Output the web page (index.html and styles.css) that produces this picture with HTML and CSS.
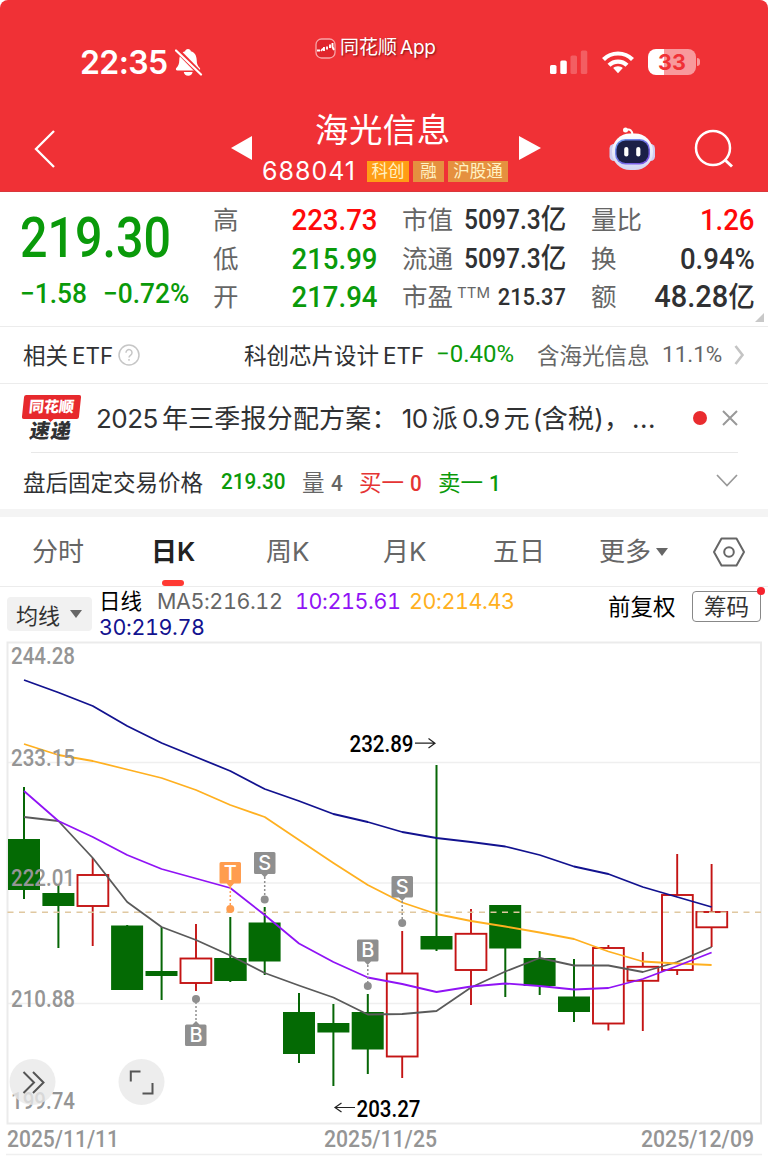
FILE: index.html
```html
<!DOCTYPE html>
<html lang="zh-CN">
<head>
    <meta charset="UTF-8">
    <meta name="viewport" content="width=device-width, initial-scale=1.0">
    <title>海光信息 688041</title>
    <link rel="stylesheet" href="styles.css">
</head>
<body>
    <header class="header">
        <div class="status-bar">
            <div class="clock">
                <span class="time">22:35</span>
                <svg class="bell" width="28" height="29" viewBox="0 0 28 29">
                    <path d="M13 1c-1.700 0-2.600 1-2.800 2.200C6 4.400 4.400 8 4.300 12c-.1 4-1 6-3 8-.8 1-.3 2.500 1 2.500h21.500c1.200 0 1.800-1.500 1-2.500-2.100-2-3-4-3.100-8-.1-4-1.700-7.600-5.900-8.800C15.600 2 14.700 1 13 1z" fill="#fff"/>
                    <path d="M8.800 24h8.800c-.3 2.200-2 3.800-4.400 3.800S9 26.200 8.800 24z" fill="#fff"/>
                    <path d="M0 0L27 27.500" stroke="#f03136" stroke-width="5"/>
                    <path d="M1 2.500L26 26.500" stroke="#fff" stroke-width="2.200" stroke-linecap="round"/>
                </svg>
            </div>
            <div class="brand">
                <svg width="21" height="21" viewBox="0 0 21 21">
                    <rect x="1" y="1" width="19" height="19" rx="5.500" fill="#e0252c" stroke="#f7a5a7" stroke-width="1.300"/>
                    <path d="M2 12.500h3M6 13l2-2.500M9 9v4M12 8.500v3M15 6.500v3.500M17.500 5v4l1.500 3" stroke="#fff" stroke-width="1.900" fill="none"/>
                </svg>
                <span class="brand-cn">同花顺</span><span class="brand-en">App</span>
            </div>
            <div class="signals">
                <svg width="38" height="24" viewBox="0 0 38 24" fill="#fff">
                    <rect x="0" y="15" width="6.500" height="9" rx="1.600"/>
                    <rect x="10.300" y="10.500" width="6.500" height="13.500" rx="1.600"/>
                    <rect x="20.500" y="5.500" width="6.500" height="18.500" rx="1.600" opacity=".22"/>
                    <rect x="30.800" y="0.500" width="6.500" height="23.500" rx="1.600" opacity=".22"/>
                </svg>
                <svg width="32" height="24" viewBox="0 0 32 24" fill="none" stroke="#fff" stroke-width="4.200">
                    <path d="M1.500 9.500A20.500 20.500 0 0 1 30.500 9.500"/>
                    <path d="M7 15.300A12.700 12.700 0 0 1 25 15.300"/>
                    <path d="M16 16.300c-2.100 0-3.700.7-4.800 1.800L16 23.200l4.800-5.100c-1.100-1.100-2.700-1.800-4.800-1.800z" fill="#fff" stroke="none"/>
                </svg>
                <div class="battery"><span>33</span></div>
            </div>
        </div>
        <div class="title-bar">
            <svg class="back" width="22" height="40" viewBox="0 0 22 40">
                <path d="M20 2L2 20L20 38" fill="none" stroke="#fff" stroke-width="2.300"/>
            </svg>
            <svg class="prev" width="22" height="24" viewBox="0 0 22 24"><path d="M0 12L21 0V24z" fill="#fff"/></svg>
            <div class="stock">
                <h1>海光信息</h1>
                <div class="stock-sub">
                    <span class="code">688041</span>
                    <span class="tag tag-kc">科创</span>
                    <span class="tag">融</span>
                    <span class="tag tag-hgt">沪股通</span>
                </div>
            </div>
            <svg class="next" width="22" height="24" viewBox="0 0 22 24"><path d="M22 12L0 0V24z" fill="#fff"/></svg>
            <svg class="robot" width="48" height="46" viewBox="0 0 48 46">
                <defs>
                    <linearGradient id="shell" x1="0" y1="0" x2="0" y2="1">
                        <stop offset="0" stop-color="#fff"/>
                        <stop offset="1" stop-color="#d3d6f2"/>
                    </linearGradient>
                    <linearGradient id="face" x1="0" y1="0" x2="1" y2="1">
                        <stop offset="0" stop-color="#6a9df0"/>
                        <stop offset="1" stop-color="#7d4be0"/>
                    </linearGradient>
                </defs>
                <path d="M18 4q6-2 6.500 5" fill="none" stroke="#fff" stroke-width="2"/>
                <circle cx="17.500" cy="4" r="2.500" fill="#fff"/>
                <rect x="1.500" y="18" width="9" height="17" rx="4.500" fill="#cfcdf0"/>
                <rect x="38" y="18" width="9" height="17" rx="4.500" fill="#cfcdf0"/>
                <rect x="4" y="7.500" width="41" height="36.500" rx="18" fill="url(#shell)"/>
                <rect x="7" y="13" width="35" height="25.500" rx="10.500" fill="url(#face)"/>
                <rect x="8.500" y="14.500" width="32" height="22.500" rx="9" fill="#1b1f47"/>
                <rect x="16.200" y="21" width="4.200" height="9.500" rx="2.100" fill="#fff"/>
                <rect x="28.200" y="21" width="4.200" height="9.500" rx="2.100" fill="#fff"/>
            </svg>
            <svg class="search" width="40" height="40" viewBox="0 0 40 40" fill="none" stroke="#fff" stroke-width="2.500">
                <circle cx="19" cy="19" r="17"/>
                <path d="M30.500 30.500L38 37.500" stroke-width="3"/>
            </svg>
        </div>
    </header>

    <section class="quote">
        <div class="price">
            <div class="last"><span class="num">219.30</span></div>
            <div class="change"><span class="num">−1.58</span><span class="num">−0.72%</span></div>
        </div>
        <dl class="stats">
            <div><dt>高</dt><dd class="num red">223.73</dd></div>
            <div><dt>低</dt><dd class="num green">215.99</dd></div>
            <div><dt>开</dt><dd class="num green">217.94</dd></div>
        </dl>
        <dl class="stats stats-mid">
            <div><dt>市值</dt><dd class="num">5097.3<b>亿</b></dd></div>
            <div><dt>流通</dt><dd class="num">5097.3<b>亿</b></dd></div>
            <div><dt>市盈<sup>TTM</sup></dt><dd class="num small">215.37</dd></div>
        </dl>
        <dl class="stats">
            <div><dt>量比</dt><dd class="num red">1.26</dd></div>
            <div><dt>换</dt><dd class="num">0.94%</dd></div>
            <div><dt>额</dt><dd class="num big">48.28<b>亿</b></dd></div>
        </dl>
        <i class="corner"></i>
    </section>

    <section class="etf">
        <span class="etf-label">相关<em>ETF</em></span>
        <svg width="22" height="22" viewBox="0 0 22 22" fill="none" stroke="#c6c6c6" stroke-width="1.500">
            <circle cx="11" cy="11" r="10"/>
            <path d="M8 8.800a3 3 0 1 1 4.700 2.300c-1.200.8-1.700 1.300-1.700 2.500M11 15v1.800"/>
        </svg>
        <span class="etf-name">科创芯片设计<em>ETF</em></span>
        <span class="etf-change">−0.40%</span>
        <span class="etf-hold">含海光信息</span>
        <span class="etf-pct">11.1%</span>
        <svg class="arrow" width="11" height="20" viewBox="0 0 11 20"><path d="M1.500 1L8.500 10L1.500 19" fill="none" stroke="#c4c4c4" stroke-width="2.600"/></svg>
    </section>

    <section class="news">
        <div class="news-logo">
            <div class="logo-top">同花顺</div>
            <div class="logo-bottom">速递</div>
        </div>
        <p><em>2025</em>年三季报分配方案：<em>10</em>派<em>0.9</em>元<em class="paren">(</em>含税)，<em class="more-dots">...</em></p>
        <i class="dot"></i>
        <svg width="16" height="16" viewBox="0 0 16 16"><path d="M1 1L15 15M15 1L1 15" stroke="#999" stroke-width="2"/></svg>
    </section>

    <section class="after-hours">
        <span class="ah-label">盘后固定交易价格</span>
        <span class="ah-price num">219.30</span>
        <span class="ah-vol">量 <i class="num">4</i></span>
        <span class="ah-buy">买一 <i class="num">0</i></span>
        <span class="ah-sell">卖一 <i class="num">1</i></span>
        <svg width="22" height="13" viewBox="0 0 22 13"><path d="M1 1L11 11.500L21 1" fill="none" stroke="#999" stroke-width="1.700"/></svg>
    </section>

    <nav class="tabs">
        <a>分时</a>
        <a class="active">日K</a>
        <a>周K</a>
        <a>月K</a>
        <a>五日</a>
        <a class="more">更多<i></i></a>
        <svg width="34" height="30" viewBox="0 0 34 30" fill="none" stroke="#666" stroke-width="2">
            <path d="M9.500 1.500H24.500L32 15L24.500 28.500H9.500L2 15z" stroke-linejoin="round"/>
            <circle cx="17" cy="15" r="4.800"/>
        </svg>
    </nav>

    <section class="ma-bar">
        <button class="ma-select">均线<i></i></button>
        <div class="ma-values">
            <span class="ma-title">日线</span>
            <span class="ma5">MA5:216.12</span>
            <span class="ma10">10:215.61</span>
            <span class="ma20">20:214.43</span>
            <span class="ma30">30:219.78</span>
        </div>
        <span class="adjust">前复权</span>
        <button class="chips">筹码<i class="badge"></i></button>
    </section>

    <svg class="chart" width="768" height="515" viewBox="0 641 768 515">
        <!-- grid -->
        <g class="grid">
            <path d="M7.500 762.500H761M7.500 883H761M7.500 1003.500H761"/>
            <path d="M6 1154.500H762"/>
            <rect class="frame" x="7.500" y="642.500" width="753.500" height="481"/>
        </g>

        <!-- falling candles -->
        <g class="down">
            <path d="M24 787V899M58.400 885V948M127.200 925V990M161.600 927V1000M230.300 917V982M264.700 907V975M299 993V1063M333.400 1004V1086M367.800 994V1074M436.500 765V951M505.300 905V997M539.700 951V995M574 959V1022"/>
            <rect x="8" y="839" width="32" height="51"/>
            <rect x="42.400" y="893" width="32" height="13"/>
            <rect x="111.100" y="925.500" width="32" height="64.500"/>
            <rect x="145.500" y="971" width="32" height="5"/>
            <rect x="214.200" y="958" width="32.500" height="23"/>
            <rect x="248.600" y="922.500" width="32" height="39"/>
            <rect x="283" y="1012" width="32" height="42"/>
            <rect x="317.400" y="1023" width="32" height="9.500"/>
            <rect x="351.700" y="1012" width="32" height="37.500"/>
            <rect x="420.500" y="936" width="32" height="13.500"/>
            <rect x="489.200" y="905" width="32" height="43.500"/>
            <rect x="523.600" y="958" width="32" height="28"/>
            <rect x="558" y="996.500" width="32" height="15.500"/>
        </g>

        <!-- rising candles -->
        <g class="up">
            <path d="M92.700 858V875M92.700 906V946M196 924V958M196 983V991M402.200 931V973M402.200 1057V1078M471 909V933M471 970V1005M608.400 945V948M608.400 1024V1030.500M642.800 952V966M642.800 981V1031M677.200 854V895M677.200 970V975M711.600 864V912M711.600 928V947"/>
            <rect x="77.500" y="875" width="30.800" height="31"/>
            <rect x="180.500" y="958.500" width="30.800" height="24.500"/>
            <rect x="386.800" y="973.500" width="30.800" height="83"/>
            <rect x="455.600" y="933.800" width="30.800" height="36.200"/>
            <rect x="593" y="948" width="30.800" height="75.500"/>
            <rect x="627.500" y="966.800" width="30.800" height="14"/>
            <rect x="662" y="895" width="30.800" height="75"/>
            <rect x="696.400" y="912" width="30.800" height="15.300"/>
        </g>

        <path class="last-line" d="M7.500 912.300H761"/>

        <!-- moving averages -->
        <g class="ma">
            <polyline stroke="#5a5a5a" points="24,817 58.400,821 92.800,858 127.200,902 161.600,927 196,940 230.300,955.500 264.700,973 299,985.500 333.400,997.500 367.800,1014.500 402.200,1014 436.500,1011 471,987.500 505.300,971.500 539.700,958 574,965.500 608.400,965.500 642.800,972 677.200,962 711.600,947"/>
            <polyline stroke="#ffb020" points="24,744 58.400,755 92.800,761 127.200,769.500 161.600,778 196,790 230.300,805 264.700,817 299,840 333.400,863 367.800,885 402.200,902.500 436.500,914 471,921 505.300,926.500 539.700,932.500 574,939 608.400,951.500 642.800,961.500 677.200,963.500 711.600,965"/>
            <polyline stroke="#9013f5" points="24,791 58.400,821 92.800,837 127.200,855 161.600,869 196,878.500 230.300,888 264.700,915 299,943.500 333.400,962 367.800,977.500 402.200,984 436.500,992 471,986.500 505.300,983.500 539.700,986 574,989.500 608.400,988 642.800,979 677.200,966 711.600,952.500"/>
            <polyline stroke="#12128f" points="24,680 58.400,692.500 92.800,706 127.200,726 161.600,743 196,757 230.300,771 264.700,789 299,801 333.400,814 367.800,822 402.200,832 436.500,838 471,842 505.300,846.500 539.700,855 574,866.500 608.400,874 642.800,887 677.200,897 711.600,907"/>
        </g>

        <!-- trade marks -->
        <g class="mark mark-t">
            <path class="stem" d="M230.300 887V906"/>
            <circle cx="230.300" cy="909" r="4"/>
            <path d="M221 862H239.500a1.500 1.500 0 0 1 1.500 1.500V882a1.500 1.500 0 0 1-1.500 1.500H234l-3.700 4l-3.700-4H221a1.500 1.500 0 0 1-1.500-1.500V863.500a1.500 1.500 0 0 1 1.500-1.500z"/>
            <text x="230.300" y="880">T</text>
        </g>
        <g class="mark">
            <path class="stem" d="M264.700 877V896"/>
            <circle cx="264.700" cy="899.500" r="4"/>
            <path d="M255.500 852H274a1.500 1.500 0 0 1 1.500 1.500V872.500a1.500 1.500 0 0 1-1.500 1.500H268l-3.300 3.500l-3.300-3.500H255.500a1.500 1.500 0 0 1-1.500-1.500V853.500a1.500 1.500 0 0 1 1.500-1.500z"/>
            <text x="264.700" y="870">S</text>
        </g>
        <g class="mark">
            <path class="stem" d="M402.200 901V919"/>
            <circle cx="402.200" cy="923" r="4"/>
            <path d="M393 876H411.500a1.500 1.500 0 0 1 1.500 1.500V896a1.500 1.500 0 0 1-1.500 1.500H405.500l-3.300 3.500l-3.300-3.500H393a1.500 1.500 0 0 1-1.500-1.500V877.500a1.500 1.500 0 0 1 1.500-1.500z"/>
            <text x="402.200" y="893.500">S</text>
        </g>
        <g class="mark">
            <path class="stem" d="M367.800 965V983"/>
            <circle cx="367.800" cy="986" r="4"/>
            <path d="M358.500 939.500H377a1.500 1.500 0 0 1 1.500 1.500V960a1.500 1.500 0 0 1-1.500 1.500H371l-3.300 3.500l-3.300-3.500H358.500a1.500 1.500 0 0 1-1.500-1.500V941a1.500 1.500 0 0 1 1.500-1.500z"/>
            <text x="367.800" y="957">B</text>
        </g>
        <g class="mark">
            <path class="stem" d="M196 1002V1021"/>
            <circle cx="196" cy="999" r="4"/>
            <path d="M186.500 1024.500H192.500l3.500-3.500l3.500 3.500H205a1.500 1.500 0 0 1 1.500 1.500V1044.500a1.500 1.500 0 0 1-1.500 1.500H186.500a1.500 1.500 0 0 1-1.500-1.500V1026a1.500 1.500 0 0 1 1.500-1.500z"/>
            <text x="196" y="1042">B</text>
        </g>

        <!-- high / low of the visible range -->
        <g class="extreme">
            <text x="349.500" y="752" textLength="64" lengthAdjust="spacingAndGlyphs">232.89</text>
            <path d="M415 743.200H435M428.500 738.500L435 743.200L428.500 748"/>
            <text x="356.500" y="1116.500" textLength="64" lengthAdjust="spacingAndGlyphs">203.27</text>
            <path d="M355 1107.500H335M341.500 1103L335 1107.500L341.500 1112"/>
        </g>

        <g class="axis">
            <text x="11" y="664" textLength="64" lengthAdjust="spacingAndGlyphs">244.28</text>
            <text x="11" y="765.500" textLength="64" lengthAdjust="spacingAndGlyphs">233.15</text>
            <text x="11" y="886" textLength="64" lengthAdjust="spacingAndGlyphs">222.01</text>
            <text x="11" y="1006.500" textLength="64" lengthAdjust="spacingAndGlyphs">210.88</text>
            <text x="11" y="1108.500" textLength="64" lengthAdjust="spacingAndGlyphs">199.74</text>
            <text x="7" y="1146.500" textLength="112" lengthAdjust="spacingAndGlyphs">2025/11/11</text>
            <text x="324" y="1146.500" textLength="113" lengthAdjust="spacingAndGlyphs">2025/11/25</text>
            <text x="641" y="1146.500" textLength="113" lengthAdjust="spacingAndGlyphs">2025/12/09</text>
        </g>

        <g class="tools">
            <circle cx="32.500" cy="1082" r="23"/>
            <circle cx="141.500" cy="1082" r="23"/>
            <path d="M23.500 1072L34 1082.500L23.500 1093M33 1072L43.500 1082.500L33 1093"/>
            <path d="M130.800 1081.500V1071.500H140.500M152.500 1083V1093.500H142.500"/>
        </g>
    </svg>
</body>
</html>
```

FILE: styles.css
```css
* {
    box-sizing: border-box;
}
body {
    margin: 0;
    width: 768px;
    background: #fff;
    color: #303133;
    font-family: Inter, "Noto Sans CJK SC", sans-serif;
    overflow-x: hidden;
}
em, i {
    font-style: normal;
}
svg {
    display: block;
    flex: none;
}
.num {
    display: inline-block;
    font-family: Roboto, "Noto Sans CJK SC", sans-serif;
    font-weight: 500;
    white-space: nowrap;
}
.red {
    color: #ff0a0a;
}
.green {
    color: #0a9a0a;
}

/* header */
.header {
    height: 192px;
    background: #f03136;
    border-bottom: 1px solid #d9383c;
    border-radius: 8px 8px 0 0;
    color: #fff;
}
.status-bar {
    display: grid;
    grid-template-columns: 235px 235px 1fr;
    height: 104px;
    padding-left: 80px;
}
.clock {
    display: flex;
    align-items: flex-start;
    padding-top: 43px;
}
.time {
    width: 95px;
    font-size: 32px;
    line-height: 40px;
    font-weight: 600;
    letter-spacing: -0.6px;
}
.bell {
    margin-top: 5px;
}
.brand {
    display: flex;
    align-items: center;
    height: 22px;
    margin-top: 37px;
    font-size: 19px;
    line-height: 22px;
    text-shadow: 1px 1px 2px rgba(80, 0, 0, 0.7);
}
.brand-cn {
    margin-left: 4px;
}
.brand-en {
    margin-left: 3px;
    letter-spacing: -0.2px;
}
.signals {
    display: flex;
    gap: 14px;
    padding-top: 50px;
}
.battery {
    position: relative;
    width: 48px;
    height: 26px;
    margin-top: -1px;
    border-radius: 8px;
    background: linear-gradient(90deg, #fff 33%, #f8999c 33%);
    color: #f03136;
    font-size: 21.500px;
    font-weight: 700;
    line-height: 27px;
    text-align: center;
}
.battery::after {
    content: "";
    position: absolute;
    right: -4px;
    top: 9px;
    width: 3px;
    height: 8px;
    border-radius: 0 4px 4px 0;
    background: #f8999c;
}
.title-bar {
    display: flex;
    align-items: flex-start;
    height: 87px;
    padding: 5px 0 0 34px;
}
.back {
    margin-top: 20px;
}
.prev {
    margin: 27px 0 0 175px;
}
.stock {
    width: 246px;
    margin-left: 9px;
}
.stock h1 {
    margin: 0 0 0 53px;
    font-size: 33.500px;
    line-height: 42px;
    font-weight: 400;
    letter-spacing: 0.4px;
}
.stock-sub {
    display: flex;
    align-items: center;
    gap: 4px;
    height: 22px;
    margin-top: 9px;
}
.code {
    width: 101px;
    font-size: 25px;
    letter-spacing: 1px;
}
.tag {
    width: 31px;
    height: 21px;
    background: #e5903f;
    color: #fff2c4;
    font-size: 16.500px;
    line-height: 20px;
    text-align: center;
    white-space: nowrap;
    flex: none;
}
.tag-kc {
    width: 42px;
    background: #ff9d15;
}
.tag-hgt {
    width: 60px;
}
.next {
    margin: 27px 0 0 11px;
}
.robot {
    margin: 17px 0 0 67px;
}
.search {
    margin: 20px 0 0 38px;
}

/* quote */
.quote {
    position: relative;
    display: grid;
    grid-template-columns: 193px 164px 164px 164px;
    column-gap: 25px;
    height: 135px;
    padding: 9px 0 0 20px;
    border-bottom: 1px solid #ececec;
}
.price {
    color: #0a9a0a;
    width: 193px;
}
.last {
    height: 73px;
    font-size: 55px;
    line-height: 72px;
}
.last .num {
    transform: scaleX(0.88);
    transform-origin: left;
}
.change {
    display: flex;
    height: 38px;
    font-size: 28px;
    line-height: 39px;
}
.change .num {
    width: 83px;
    transform: scaleX(0.94);
    transform-origin: left;
}
.stats {
    margin: 0 0 0 -25px;
    width: 164px;
}
.stats div {
    display: flex;
    justify-content: space-between;
    height: 38.500px;
    line-height: 38px;
}
.stats dt {
    color: #666;
    font-size: 25.500px;
    white-space: nowrap;
}
.stats sup {
    margin-left: 4px;
    font-size: 15px;
    line-height: 0;
    vertical-align: 8px;
}
.stats dd {
    margin: 0;
    font-size: 29px;
    transform: scaleX(0.95);
    transform-origin: right;
}
.stats dd b {
    font-size: 28px;
    font-weight: 500;
}
.stats-mid dd {
    font-size: 27px;
    transform: scaleX(0.91);
}
.stats-mid dd.small {
    font-size: 24px;
}
.stats dd.big {
    font-size: 30.500px;
}
.corner {
    position: absolute;
    right: 4px;
    bottom: 4px;
    border-left: 9px solid transparent;
    border-bottom: 9px solid #c8c8c8;
}

/* related etf */
.etf {
    display: flex;
    align-items: center;
    height: 57px;
    padding-left: 23px;
    border-bottom: 1px solid #ececec;
    font-size: 22.500px;
    white-space: nowrap;
}
.etf span {
    margin-bottom: 3px;
}
.etf em {
    margin-left: 4px;
}
.etf-label {
    width: 95px;
}
.etf .etf-name {
    width: 192px;
    margin-left: 104px;
}
.etf-change {
    width: 101px;
    color: #0a9a0a;
    font-family: Roboto, sans-serif;
    font-size: 24px;
}
.etf-hold {
    width: 125px;
    color: #666;
}
.etf-pct {
    width: 72px;
    color: #666;
    font-family: Roboto, sans-serif;
}

/* news */
.news {
    display: flex;
    align-items: center;
    height: 68px;
    padding-left: 23px;
}
.news-logo {
    width: 57px;
    height: 47px;
    text-align: center;
    font-weight: 900;
}
.logo-top {
    position: relative;
    height: 24px;
    border-radius: 2px;
    background: #e7292d;
    color: #fff;
    font-size: 15px;
    line-height: 23px;
    transform: skewX(-6deg);
}
.logo-top::after {
    content: "";
    position: absolute;
    left: 25px;
    bottom: -3px;
    border: 4px solid transparent;
    border-top: 4px solid #e7292d;
    border-bottom: 0;
}
.logo-bottom {
    padding-right: 1px;
    font-size: 20px;
    line-height: 25px;
    letter-spacing: 1px;
    transform: skewX(-10deg);
}
.news p {
    width: 597px;
    margin: -4px 0 0 16px;
    font-size: 26px;
    letter-spacing: 0.2px;
    white-space: nowrap;
}
.news p em {
    margin: 0 4px;
    letter-spacing: -0.5px;
}
.news p em:first-child {
    margin-left: 0;
}
.news p .paren {
    margin: 0 0 0 3px;
}
.news p .more-dots {
    margin: 0 0 0 2px;
    letter-spacing: 0.5px;
}
.dot {
    width: 14px;
    height: 14px;
    margin-right: 15px;
    border-radius: 50%;
    background: #e92c2f;
}

/* after hours */
.after-hours {
    display: flex;
    align-items: center;
    height: 57px;
    padding-left: 23px;
    font-size: 22.500px;
    white-space: nowrap;
    position: relative;
}
.after-hours::before {
    content: "";
    position: absolute;
    top: 0;
    left: 31px;
    right: 30px;
    border-top: 1px solid #e8e8e8;
}
.after-hours .num {
    transform: scaleX(0.92);
    transform-origin: left;
}
.ah-label {
    width: 198px;
}
.ah-price {
    width: 81px;
    color: #0a9a0a;
}
.ah-vol {
    width: 57px;
    color: #666;
}
.ah-buy {
    width: 79px;
    color: #e53434;
}
.ah-sell {
    width: 278px;
    color: #0a9a0a;
}

/* tabs */
.tabs {
    display: flex;
    align-items: center;
    height: 78px;
    padding-left: 32px;
    border-top: 8px solid #f4f4f4;
    border-bottom: 1px solid #ececec;
    color: #666;
    font-size: 26px;
}
.tabs a {
    position: relative;
    width: 117px;
    line-height: 68px;
}
.tabs a:nth-child(1) {
    width: 119px;
}
.tabs a:nth-child(2) {
    width: 115px;
}
.tabs a:nth-child(4) {
    width: 110px;
}
.tabs a:nth-child(5) {
    width: 106px;
}
.tabs a.more {
    display: flex;
    align-items: center;
    width: 113px;
}
.tabs .active {
    color: #222;
    font-weight: 600;
}
.tabs .active::after {
    content: "";
    position: absolute;
    left: 11px;
    bottom: 0;
    width: 22px;
    height: 6px;
    border-radius: 3px;
    background: #ff3933;
}
.more i, .ma-select i {
    margin-left: 5px;
    border: 6px solid transparent;
    border-top: 8px solid #666;
    border-bottom: 0;
}

/* moving average bar */
.ma-bar {
    display: flex;
    height: 54px;
    padding-left: 7px;
}
.ma-bar button {
    font-family: inherit;
    color: #333;
    padding: 0;
}
.ma-select {
    display: flex;
    align-items: center;
    width: 85px;
    height: 34px;
    margin-top: 10px;
    border: 0;
    border-radius: 4px;
    background: #f1f1f1;
    font-size: 22px;
}
.ma-bar .ma-select {
    padding-left: 9px;
}
.ma-select i {
    margin-left: 10px;
}
.ma-values {
    display: flex;
    flex-wrap: wrap;
    align-content: flex-start;
    width: 509px;
    margin-left: 7px;
    padding-top: 1px;
    font-size: 21.500px;
    line-height: 26px;
    font-variant-numeric: tabular-nums;
    letter-spacing: -0.4px;
}
.ma-title {
    width: 58px;
    color: #000;
    letter-spacing: 0;
}
.ma5 {
    width: 138px;
    color: #666;
}
.ma10 {
    width: 114px;
    color: #9013f5;
}
.ma20 {
    width: 150px;
    color: #ffb020;
}
.ma30 {
    color: #12128f;
}
.adjust {
    width: 84px;
    color: #000;
    font-size: 22.500px;
    line-height: 40px;
}
.chips {
    position: relative;
    width: 69px;
    height: 31px;
    margin-top: 4px;
    border: 1px solid #888;
    border-radius: 4px;
    background: #fff;
    font-size: 22.500px;
    line-height: 27px;
}
.badge {
    position: absolute;
    top: -5px;
    right: -5px;
    width: 8px;
    height: 8px;
    border-radius: 50%;
    background: #f5222d;
}

/* k-line chart */
.chart {
    font-family: Roboto, sans-serif;
}
.grid path {
    stroke: #efefef;
    stroke-width: 1.500;
}
.grid .frame {
    fill: none;
    stroke: #ebebeb;
    stroke-width: 2;
}
.down path {
    stroke: #066606;
    stroke-width: 2;
}
.down rect {
    fill: #046a04;
}
.up {
    fill: none;
    stroke: #c41414;
    stroke-width: 1.900;
}
.last-line {
    stroke: #e0c8a0;
    stroke-width: 1.500;
    stroke-dasharray: 6 5.500;
}
.ma {
    fill: none;
    stroke-width: 1.800;
    stroke-linejoin: round;
}
.mark {
    fill: #8f8f8f;
}
.mark .stem {
    stroke: #8f8f8f;
    stroke-width: 1.500;
    stroke-dasharray: 2 2;
}
.mark text {
    fill: #fff;
    font-family: Inter, sans-serif;
    font-size: 20px;
    font-weight: 500;
    text-anchor: middle;
}
.mark-t {
    fill: #ff9d4f;
}
.mark-t .stem {
    stroke: #ff9d4f;
}
.extreme text {
    fill: #000;
    font-size: 23px;
    font-weight: 500;
}
.extreme path {
    fill: none;
    stroke: #222;
    stroke-width: 1.200;
}
.axis text {
    fill: #959595;
    font-size: 23px;
    font-weight: 500;
}
.tools circle {
    fill: #e8e8e8;
    fill-opacity: 0.8;
}
.tools path {
    fill: none;
    stroke: #555;
    stroke-width: 2;
}
```
